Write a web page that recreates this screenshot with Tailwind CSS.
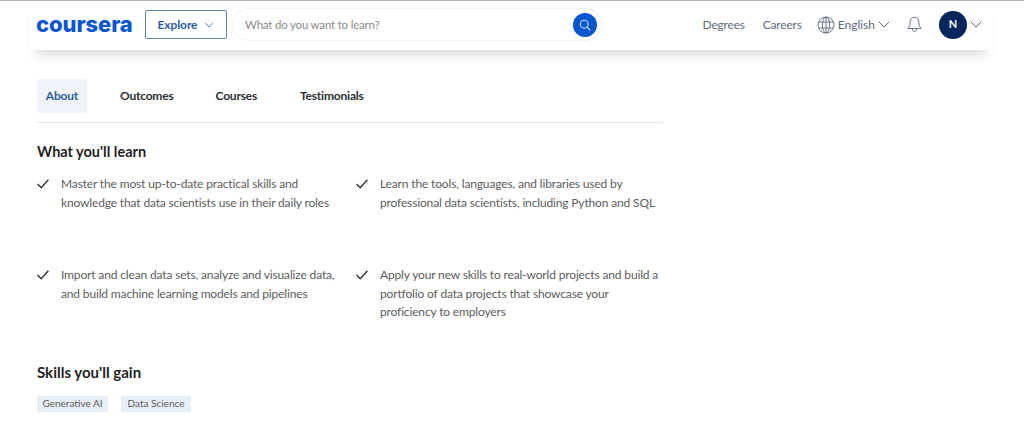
<!DOCTYPE html>
<html lang="en">

<head>
    <meta charset="UTF-8" />
    <title>Coursera</title>
    <script src="https://cdn.jsdelivr.net/npm/@tailwindcss/browser@4"></script>
</head>

<body class="bg-white h-[431px] overflow-hidden font-['Lato',sans-serif]">
    <div class="border-t border-[#b4b4b4]">
        <!-- header -->
        <header class="h-[49px] ml-[30px] mr-[32px] bg-white flex items-center pl-[6px] pr-[10px] pb-[2px] shadow-[0_10px_12px_-6px_rgba(0,0,0,0.16)]">
            <span class="w-[98px] mb-[2px] font-['Inter',sans-serif] font-extrabold text-[22px] tracking-[-0.1px] text-[#0a56d0] leading-none">coursera</span>
            <button class="ml-[11px] w-[82px] h-[29px] border border-[#5d83a6] rounded-[2px] flex items-center justify-center gap-[7px] text-[12px] tracking-[-0.1px] font-bold text-[#2a5f9e]">
                Explore
                <svg class="w-[10px] h-[6px]" viewBox="0 0 10 6" fill="none" stroke="#5a7fa5" stroke-width="1"><path d="M1 .8 5 5 9 .8" /></svg>
            </button>
            <div class="ml-[5px] w-[370px] h-[33px] border border-[#eef0f2] rounded-full flex items-center justify-between pl-[12px] pr-[4px]">
                <span class="text-[11.5px] tracking-[-0.2px] text-[#8a8a8a]">What do you want to learn?</span>
                <span class="w-[24px] h-[24px] rounded-full bg-[#0a56d0] flex items-center justify-center">
                    <svg class="w-[12px] h-[12px]" viewBox="0 0 12 12" fill="none" stroke="#cfe0f5" stroke-width="1.1"><circle cx="5.2" cy="5.2" r="3.9" /><path d="m8 8 3.3 3.3" /></svg>
                </span>
            </div>
            <nav class="ml-auto flex items-center text-[#5d6b7c] text-[12px] tracking-[-0.2px]">
                <span>Degrees</span>
                <span class="ml-[18px]">Careers</span>
                <svg class="ml-[15px] w-[18px] h-[18px]" viewBox="0 0 18 18" fill="none" stroke="#5d6b7c" stroke-width="0.9">
                    <circle cx="9" cy="9" r="8" /><ellipse cx="9" cy="9" rx="3.6" ry="8" /><path d="M9 1v16M1.7 6h14.6M1.7 12h14.6" />
                </svg>
                <span class="ml-[3px] tracking-normal">English</span>
                <svg class="ml-[3px] w-[12px] h-[7px]" viewBox="0 0 12 7" fill="none" stroke="#5d6b7c" stroke-width="1"><path d="M.8.8 6 6 11.2.8" /></svg>
                <svg class="ml-[17px] w-[15px] h-[17px]" viewBox="0 0 15 17" fill="none" stroke="#5d6b7c" stroke-width="0.9">
                    <path d="M7.5 1.2c-2.8 0-4.3 2-4.3 4.6 0 3.4-.8 5-2.4 6.7h13.4c-1.6-1.7-2.4-3.3-2.4-6.7 0-2.6-1.5-4.6-4.3-4.6Z" /><path d="M5.4 12.8c0 3.6 4.2 3.6 4.2 0" />
                </svg>
                <span class="ml-[17px] w-[28px] h-[28px] rounded-full bg-[#05265c] text-white font-bold text-[11px] flex items-center justify-center">N</span>
                <svg class="ml-[3px] w-[12px] h-[7px]" viewBox="0 0 12 7" fill="none" stroke="#5d6b7c" stroke-width="1"><path d="M.8.8 6 6 11.2.8" /></svg>
            </nav>
        </header>
    </div>

    <main class="w-[626px] ml-[37px]">
        <!-- tabs -->
        <div class="mt-[29px] h-[44px] border-b border-[#e5e7eb] flex items-start text-[12px] tracking-[-0.2px] font-bold text-[#2a2f35]">
            <span class="w-[50px] h-[34px] bg-[#f0f4fa] rounded-[2px] text-[#2a5f9e] flex items-center justify-center">About</span>
            <span class="ml-[33px] h-[34px] flex items-center">Outcomes</span>
            <span class="ml-[42px] h-[34px] flex items-center">Courses</span>
            <span class="ml-[43px] h-[34px] flex items-center">Testimonials</span>
        </div>

        <h2 class="mt-[19px] text-[14.5px] leading-[20px] font-bold text-[#1f1f1f]">What you'll learn</h2>

        <!-- outcomes -->
        <ul class="mt-[13px] grid grid-cols-[319px_1fr] text-[12px] tracking-[-0.15px] leading-[18.5px] text-[#5c5c5c]">
            <li class="flex gap-[12px] h-[91px] pr-[10px]">
                <svg class="shrink-0 mt-[4px] w-[12px] h-[10px]" viewBox="0 0 12 10" fill="none" stroke="#333" stroke-width="1.4"><path d="M.6 5 4.2 8.8 11.4.8" /></svg>
                <span>Master the most up-to-date practical skills and knowledge that data scientists use in their daily roles</span>
            </li>
            <li class="flex gap-[12px] h-[91px]">
                <svg class="shrink-0 mt-[4px] w-[12px] h-[10px]" viewBox="0 0 12 10" fill="none" stroke="#333" stroke-width="1.4"><path d="M.6 5 4.2 8.8 11.4.8" /></svg>
                <span>Learn the tools, languages, and libraries used by professional data scientists, including Python and SQL</span>
            </li>
            <li class="flex gap-[12px] pr-[10px]">
                <svg class="shrink-0 mt-[4px] w-[12px] h-[10px]" viewBox="0 0 12 10" fill="none" stroke="#333" stroke-width="1.4"><path d="M.6 5 4.2 8.8 11.4.8" /></svg>
                <span>Import and clean data sets, analyze and visualize data, and build machine learning models and pipelines</span>
            </li>
            <li class="flex gap-[12px]">
                <svg class="shrink-0 mt-[4px] w-[12px] h-[10px]" viewBox="0 0 12 10" fill="none" stroke="#333" stroke-width="1.4"><path d="M.6 5 4.2 8.8 11.4.8" /></svg>
                <span class="w-[280px]">Apply your new skills to real-world projects and build a portfolio of data projects that showcase your proficiency to employers</span>
            </li>
        </ul>

        <h2 class="mt-[40px] text-[15px] leading-[20px] font-bold text-[#1f1f1f]">Skills you'll gain</h2>

        <div class="mt-[14px] flex gap-[13px] text-[10px] text-[#5c5c5c]">
            <span class="w-[71px] h-[16px] bg-[#e8eef7] rounded-[2px] flex items-center justify-center">Generative AI</span>
            <span class="w-[70px] h-[16px] bg-[#e8eef7] rounded-[2px] flex items-center justify-center">Data Science</span>
        </div>
    </main>
</body>

</html>
